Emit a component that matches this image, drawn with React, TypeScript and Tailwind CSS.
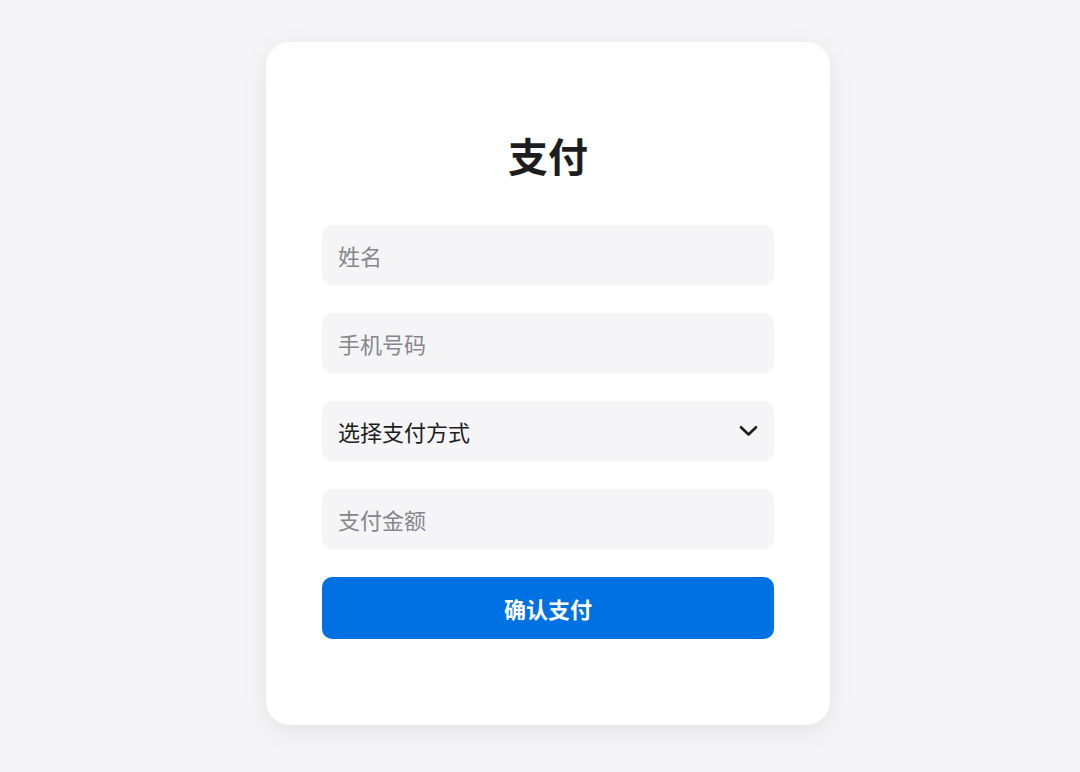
import { useState } from 'react';

const fieldClass =
  'h-[60px] w-full rounded-[10px] bg-[#f5f5f7] px-4 text-[22px] text-[#1d1d1f] outline-none placeholder:text-[#86868b]';

export default function App() {
  const [name, setName] = useState('');
  const [phone, setPhone] = useState('');
  const [method, setMethod] = useState('');
  const [amount, setAmount] = useState('');

  return (
    <div
      className="flex min-h-screen items-center justify-center bg-[#f5f5f7] pb-[5px] pl-4"
      style={{ fontFamily: '"Noto Sans CJK SC", "Noto Sans", sans-serif' }}
    >
      <div className="w-[564px] rounded-[24px] bg-white px-14 pt-[89px] pb-[86px] shadow-[0_6px_24px_rgba(0,0,0,0.08)]">
        <h1 className="text-center text-[40px] leading-[48px] font-bold text-[#1d1d1f]">支付</h1>

        <form className="mt-[46px] flex flex-col gap-7" onSubmit={(e) => e.preventDefault()}>
          <input
            className={fieldClass}
            placeholder="姓名"
            value={name}
            onChange={(e) => setName(e.target.value)}
          />
          <input
            className={fieldClass}
            placeholder="手机号码"
            value={phone}
            onChange={(e) => setPhone(e.target.value)}
          />
          <div className="relative">
            <select
              className={`${fieldClass} cursor-pointer appearance-none`}
              value={method}
              onChange={(e) => setMethod(e.target.value)}
            >
              <option value="">选择支付方式</option>
              <option value="wechat">微信支付</option>
              <option value="alipay">支付宝</option>
              <option value="card">银行卡</option>
            </select>
            <svg
              className="pointer-events-none absolute top-1/2 right-4 -translate-y-1/2"
              width="19"
              height="12"
              viewBox="0 0 19 12"
              fill="none"
            >
              <path
                d="M2 2.2 L9.5 9.5 L17 2.2"
                stroke="#1d1d1f"
                strokeWidth="2.6"
                strokeLinecap="round"
                strokeLinejoin="round"
              />
            </svg>
          </div>
          <input
            className={fieldClass}
            placeholder="支付金额"
            value={amount}
            onChange={(e) => setAmount(e.target.value)}
          />
          <button
            type="submit"
            className="h-[62px] w-full rounded-[10px] bg-[#0071e3] text-[22px] font-bold text-white"
          >
            确认支付
          </button>
        </form>
      </div>
    </div>
  );
}
